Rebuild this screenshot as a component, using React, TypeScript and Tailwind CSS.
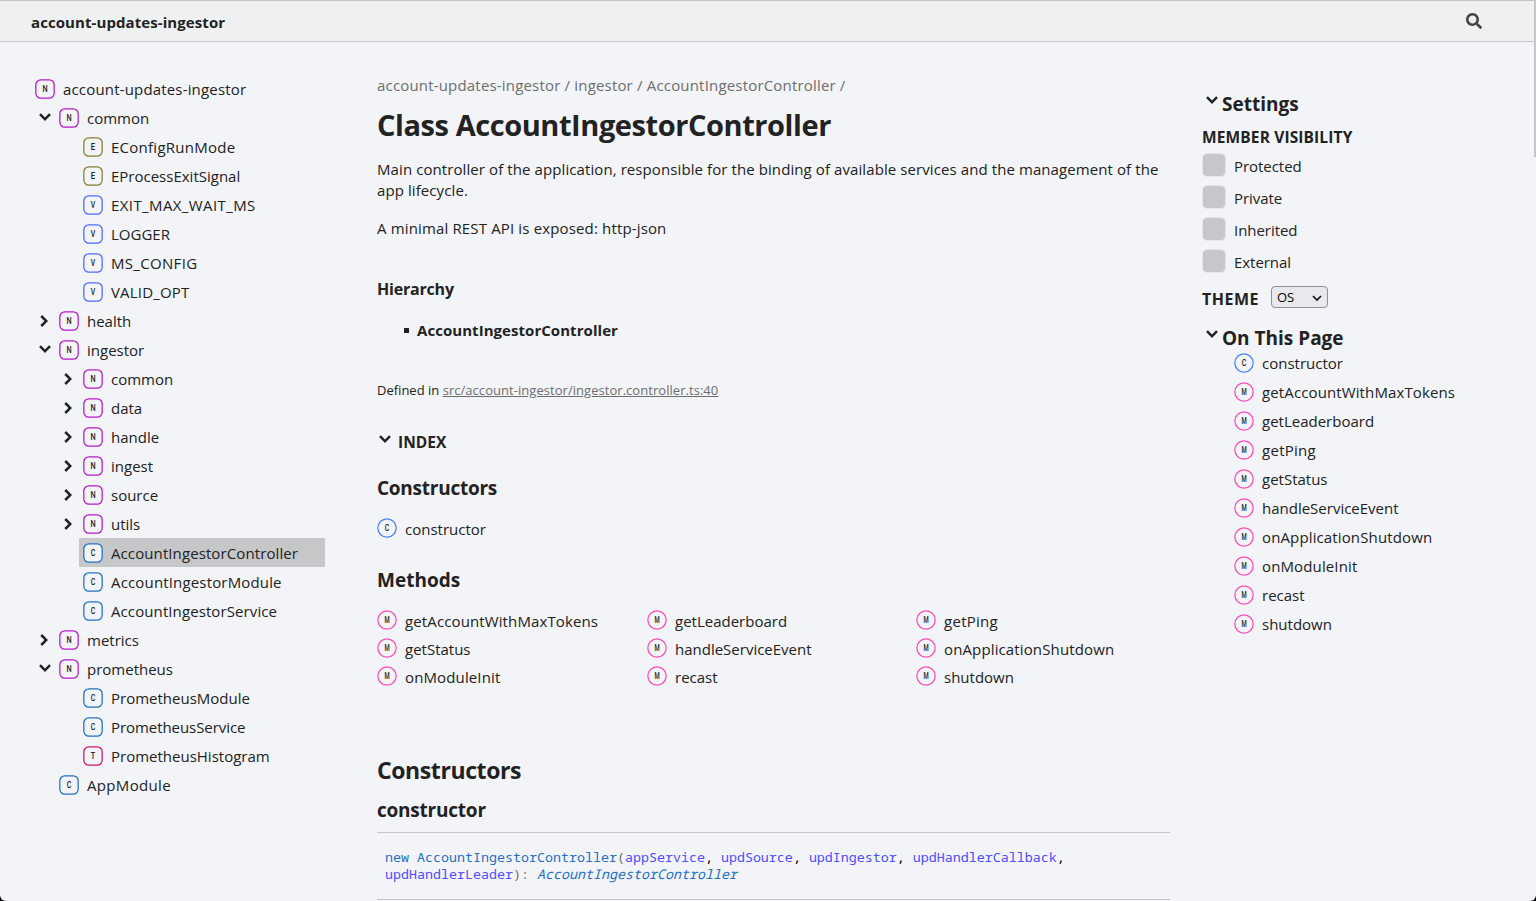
import React from "react";

type Kind = "N" | "E" | "V" | "C" | "T" | "M" | "K";

const COLORS: Record<Kind, string> = {
  N: "#b518c9",
  E: "#8a7c2c",
  V: "#4d68ff",
  C: "#1f70c2",
  T: "#d51270",
  M: "#ff4db8",
  K: "#4d7fff",
};

// Horizontal condensing of each badge letter so that all have about the same width.
const LETTER_SCALE: Record<Kind, number> = { N: 0.76, E: 0.8, V: 0.72, C: 0.72, T: 0.74, M: 0.62, K: 0.72 };

const TRACKING: Record<string, string> = {
  "account-updates-ingestor": "tracking-[0.17px]",
  EConfigRunMode: "tracking-[0.26px]",
  EXIT_MAX_WAIT_MS: "tracking-[0.4px]",
  MS_CONFIG: "tracking-[0.32px]",
  VALID_OPT: "tracking-[0.17px]",
  AccountIngestorController: "tracking-[0.1px]",
  AccountIngestorModule: "tracking-[0.16px]",
  AccountIngestorService: "tracking-[0.1px]",
  PrometheusService: "tracking-[-0.06px]",
  AppModule: "tracking-[0.33px]",
  getAccountWithMaxTokens: "tracking-[0.12px]",
  getPing: "tracking-[0.28px]",
  onApplicationShutdown: "tracking-[0.13px]",
  onModuleInit: "tracking-[0.13px]",
};

function KindIcon({ kind, className = "" }: { kind: Kind; className?: string }) {
  const round = kind === "M" || kind === "K";
  return (
    <svg viewBox="0 0 24 24" className={`size-5 shrink-0 ${className}`}>
      <rect x="1" y="1" width="22" height="22" rx={round ? 11 : 6} fill="#f2f4f8" stroke={COLORS[kind]} strokeWidth="1.5" />
      <text
        transform={`translate(12 16) scale(${LETTER_SCALE[kind]} 1)`}
        textAnchor="middle"
        fill="#222"
        className="font-['Roboto',sans-serif] text-[11.5px] font-medium"
      >
        {kind === "K" ? "C" : kind}
      </text>
    </svg>
  );
}

function Label({ children }: { children: string }) {
  return <span className={`leading-[22px] ${TRACKING[children] ?? ""}`}>{children}</span>;
}

function Chevron({ closed = false, className = "" }: { closed?: boolean; className?: string }) {
  return (
    <svg viewBox="0 0 24 24" className={`size-5 shrink-0 ${closed ? "-rotate-90" : ""} ${className}`}>
      <path d="M4.93896 8.531L12 15.591L19.061 8.531L16.939 6.409L12 11.349L7.06098 6.409L4.93896 8.531Z" fill="#222" />
    </svg>
  );
}

type Node = { level: 0 | 1 | 2; kind: Kind; name: string; state?: "open" | "closed" | "current" };

const TREE: Node[] = [
  { level: 0, kind: "N", name: "account-updates-ingestor" },
  { level: 1, kind: "N", name: "common", state: "open" },
  { level: 2, kind: "E", name: "EConfigRunMode" },
  { level: 2, kind: "E", name: "EProcessExitSignal" },
  { level: 2, kind: "V", name: "EXIT_MAX_WAIT_MS" },
  { level: 2, kind: "V", name: "LOGGER" },
  { level: 2, kind: "V", name: "MS_CONFIG" },
  { level: 2, kind: "V", name: "VALID_OPT" },
  { level: 1, kind: "N", name: "health", state: "closed" },
  { level: 1, kind: "N", name: "ingestor", state: "open" },
  { level: 2, kind: "N", name: "common", state: "closed" },
  { level: 2, kind: "N", name: "data", state: "closed" },
  { level: 2, kind: "N", name: "handle", state: "closed" },
  { level: 2, kind: "N", name: "ingest", state: "closed" },
  { level: 2, kind: "N", name: "source", state: "closed" },
  { level: 2, kind: "N", name: "utils", state: "closed" },
  { level: 2, kind: "C", name: "AccountIngestorController", state: "current" },
  { level: 2, kind: "C", name: "AccountIngestorModule" },
  { level: 2, kind: "C", name: "AccountIngestorService" },
  { level: 1, kind: "N", name: "metrics", state: "closed" },
  { level: 1, kind: "N", name: "prometheus", state: "open" },
  { level: 2, kind: "C", name: "PrometheusModule" },
  { level: 2, kind: "C", name: "PrometheusService" },
  { level: 2, kind: "T", name: "PrometheusHistogram" },
  { level: 1, kind: "C", name: "AppModule" },
];

const INDENT = { 0: "pl-[31px]", 1: "pl-[31px]", 2: "pl-[55px]" };

function Tree() {
  return (
    <nav className="flex w-[325px] shrink-0 flex-col pt-8">
      {TREE.map((n, i) => (
        <div key={i} className={`flex h-[29px] ${INDENT[n.level]}`}>
          {n.level > 0 && (
            <span className="flex w-6 shrink-0 pt-[5px] pl-1">
              {(n.state === "open" || n.state === "closed") && <Chevron closed={n.state === "closed"} />}
            </span>
          )}
          <a className={`flex grow gap-2 pt-1 pl-1 ${n.state === "current" ? "bg-[#c5c7c9]" : ""}`}>
            <KindIcon kind={n.kind} className="mt-px" />
            <Label>{n.name}</Label>
          </a>
        </div>
      ))}
    </nav>
  );
}

const METHODS = [
  "getAccountWithMaxTokens",
  "getLeaderboard",
  "getPing",
  "getStatus",
  "handleServiceEvent",
  "onApplicationShutdown",
  "onModuleInit",
  "recast",
  "shutdown",
];

const P = ({ children }: { children: string }) => <span className="text-[#4d4dff]">{children}</span>;

function Content() {
  return (
    <main className="flex w-[793px] shrink-0 flex-col">
      <div className="mt-8 h-[22px] leading-[22px] tracking-[0.18px] text-[#6e6e6e]">
        account-updates-ingestor / ingestor / AccountIngestorController /
      </div>
      <h1 className="mt-[9px] h-10 text-[29px] leading-10 font-bold tracking-[-0.43px]">Class AccountIngestorController</h1>
      <p className="mt-[14px] leading-[21px] tracking-[0.09px]">
        Main controller of the application, responsible for the binding of available services and the management of the
        <br />
        app lifecycle.
      </p>
      <p className="mt-[17px] leading-[21px] tracking-[0.15px]">A minimal REST API is exposed: http-json</p>
      <h4 className="mt-[39px] text-[16px] leading-[22px] font-bold tracking-[-0.2px]">Hierarchy</h4>
      <div className="mt-[19px] flex h-[22px] items-center pl-[27px]">
        <span className="mt-px size-[5px] bg-[#222]" />
        <span className="ml-2 leading-[22px] font-bold tracking-[0.05px]">AccountIngestorController</span>
      </div>
      <div className="mt-[39px] text-[13px] leading-5">
        Defined in{" "}
        <a className="tracking-[0.045px] text-[#6e6e6e] underline">src/account-ingestor/ingestor.controller.ts:40</a>
      </div>
      <div className="mt-[30px] flex h-[22px]">
        <Chevron className="-ml-0.5" />
        <h5 className="ml-[3px] pt-px text-[15.5px] leading-[22px] font-bold">INDEX</h5>
      </div>
      <h3 className="mt-[23px] text-[19px] leading-[26px] font-bold tracking-[-0.25px]">Constructors</h3>
      <div className="mt-[17px] flex gap-2">
        <KindIcon kind="K" />
        <Label>constructor</Label>
      </div>
      <h3 className="mt-[27px] text-[19px] leading-[26px] font-bold">Methods</h3>
      <div className="mt-[17px] grid grid-cols-[270px_269px_254px]">
        {METHODS.map((m) => (
          <div key={m} className="flex h-7 gap-2">
            <KindIcon kind="M" />
            <Label>{m}</Label>
          </div>
        ))}
      </div>
      <h2 className="mt-[60px] text-[23px] leading-[32px] font-bold tracking-[-0.4px]">Constructors</h2>
      <h3 className="mt-[11px] text-[19px] leading-[26px] font-bold tracking-[-0.22px]">constructor</h3>
      <div className="mt-[9px] border-y border-[#c5c7c9] py-4 pl-2 font-['Noto_Sans_Mono','DejaVu_Sans_Mono',monospace] text-[13.333px] leading-[17px] text-[#6e6e6e]">
        <span className="text-[#1f70c2]">new AccountIngestorController</span>(<P>appService</P>
        <span className="text-black">, </span>
        <P>updSource</P>
        <span className="text-black">, </span>
        <P>updIngestor</P>
        <span className="text-black">, </span>
        <P>updHandlerCallback</P>
        <span className="text-black">,</span>
        <br />
        <P>updHandlerLeader</P>): <i className="text-[#1f70c2]">AccountIngestorController</i>
      </div>
    </main>
  );
}

function Aside() {
  return (
    <aside className="ml-8 flex w-[300px] flex-col pt-12">
      <div className="flex h-7">
        <Chevron className="mt-px" />
        <h3 className="text-[19px] leading-7 font-bold">Settings</h3>
      </div>
      <h5 className="mt-2 text-[15.5px] leading-[22px] font-bold tracking-[0.13px]">MEMBER VISIBILITY</h5>
      <div className="mt-1 flex flex-col">
        {["Protected", "Private", "Inherited", "External"].map((s) => (
          <label key={s} className="flex h-8">
            <span className="mt-px size-6 rounded-[5px] border border-[#e6e8eb] bg-[#c5c7c9]" />
            <span className="ml-2 pt-[3px] leading-[22px] tracking-[-0.05px]">{s}</span>
          </label>
        ))}
      </div>
      <div className="flex h-[27px]">
        <h5 className="w-[57px] pt-2 text-[16px] leading-[22px] font-bold tracking-[0.5px]">THEME</h5>
        <span className="mt-[6px] ml-3 flex h-[22px] w-[57px] shrink-0 items-center justify-between rounded-[4px] border border-[#8f8f9d] bg-[#e9e9ed] px-[5px] pt-px text-[13px] text-black">
          OS
          <svg viewBox="0 0 10 10" className="size-[10px]" fill="none" stroke="#111" strokeWidth="1.6">
            <path d="M1 3l4 4 4-4" />
          </svg>
        </span>
      </div>
      <div className="mt-[17px] flex h-7">
        <Chevron className="mt-px" />
        <h3 className="text-[19px] leading-7 font-bold">On This Page</h3>
      </div>
      <div className="flex flex-col pl-8">
        {["constructor", ...METHODS].map((m, i) => (
          <a key={m} className="flex h-[29px] gap-2">
            <KindIcon kind={i === 0 ? "K" : "M"} className="mt-px" />
            <Label>{m}</Label>
          </a>
        ))}
      </div>
    </aside>
  );
}

export default function App() {
  return (
    <div className="bg-black">
      <div className="relative h-[901px] w-[1536px] overflow-hidden rounded-b-[6px] bg-[#f2f4f8] font-['Open_Sans',sans-serif] text-[15px] text-[#222]">
        <header className="flex h-[42px] items-center justify-between border-y border-[#c5c7c9] bg-[#eff0f1] pr-[54px] pl-[31px]">
          <span className="pt-[3px] font-bold tracking-[0.08px]">account-updates-ingestor</span>
          <svg viewBox="0 0 16 16" className="size-4" fill="#444">
            <path d="M15.7824,13.833L12.6666,10.7177C12.5259,10.5771 12.3353,10.499 12.1353,10.499L11.6259,10.499C12.4884,9.39596 13.001,8.00859 13.001,6.49937C13.001,2.90909 10.0914,0 6.50048,0C2.90959,0 0,2.90909 0,6.49937C0,10.0896 2.90959,12.9987 6.50048,12.9987C8.00996,12.9987 9.39756,12.4863 10.5008,11.6239L10.5008,12.1332C10.5008,12.3332 10.5789,12.5238 10.7195,12.6644L13.8354,15.7797C14.1292,16.0734 14.6042,16.0734 14.8948,15.7797L15.7793,14.8954C16.0731,14.6017 16.0731,14.1267 15.7824,13.833ZM6.50048,10.499C4.29094,10.499 2.50018,8.71165 2.50018,6.49937C2.50018,4.29021 4.28781,2.49976 6.50048,2.49976C8.71001,2.49976 10.5008,4.28708 10.5008,6.49937C10.5008,8.70852 8.71314,10.499 6.50048,10.499Z" />
          </svg>
        </header>
        <div className="flex">
          <Tree />
          <div className="w-[52px] shrink-0" />
          <Content />
          <Aside />
        </div>
        <div className="absolute top-0 right-0 h-[157px] w-[2px] bg-[#c5c7c9]" />
      </div>
    </div>
  );
}
